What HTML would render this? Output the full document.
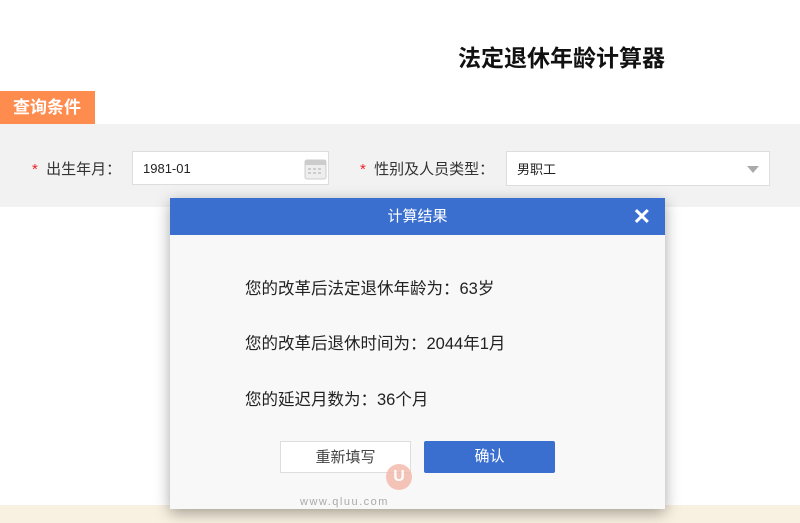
<!DOCTYPE html>
<html><head><meta charset="utf-8"><style>
body{margin:0;width:800px;height:523px;position:relative;overflow:hidden;background:#fff;font-family:"Liberation Sans","Noto Sans CJK SC",sans-serif;}
.a{position:absolute}
</style></head><body>
<div class="a" style="left:458px;top:39px;font-size:23px;font-weight:bold;color:#111;white-space:nowrap">法定退休年龄计算器</div>
<div class="a" style="left:0;top:91px;width:95px;height:33px;background:#ff8c4f;color:#fff;font-size:17px;font-weight:bold;line-height:33px;text-indent:13px">查询条件</div>
<div class="a" style="left:0;top:124px;width:800px;height:83px;background:#f2f2f2"></div>
<div class="a" style="left:32px;top:158px;font-size:15px;color:#333"><span style="color:#e22">*</span>&nbsp; 出生年月：</div>
<div class="a" style="left:132px;top:151px;width:197px;height:34px;background:#fff;border:1px solid #ddd;box-sizing:border-box;font-size:13px;line-height:34px;text-indent:10px;color:#222">1981-01
<svg class="a" style="left:171px;top:5px" width="23" height="23" viewBox="0 0 23 23"><rect x="1" y="3" width="21" height="19" rx="2" fill="#eee" stroke="#ccc"/><rect x="1" y="3" width="21" height="5" fill="#ccc"/><g fill="#ccc"><rect x="4" y="11" width="3" height="2"/><rect x="9" y="11" width="3" height="2"/><rect x="14" y="11" width="3" height="2"/><rect x="4" y="15" width="3" height="2"/><rect x="9" y="15" width="3" height="2"/><rect x="14" y="15" width="3" height="2"/></g></svg></div>
<div class="a" style="left:360px;top:158px;font-size:15px;color:#333"><span style="color:#e22">*</span>&nbsp; 性别及人员类型：</div>
<div class="a" style="left:506px;top:151px;width:264px;height:35px;background:#fff;border:1px solid #ddd;box-sizing:border-box;font-size:13px;line-height:35px;text-indent:10px;color:#222">男职工<span class="a" style="right:10px;top:14px;width:0;height:0;border-left:6px solid transparent;border-right:6px solid transparent;border-top:7px solid #aaa"></span></div>
<div class="a" style="left:0;top:505px;width:800px;height:18px;background:#f8f0e0"></div>
<div class="a" style="left:170px;top:198px;width:495px;height:311px;background:#f8f8f8;box-shadow:0 4px 14px rgba(0,0,0,.35)">
<div style="height:37px;background:#3a6fd0;color:#fff;text-align:center;line-height:37px;font-size:15px;position:relative">计算结果<span class="a" style="right:14px;top:0;font-size:22px;font-weight:bold">✕</span></div>
<div class="a" style="left:75px;top:77px;font-size:16.5px;color:#222;white-space:nowrap">您的改革后法定退休年龄为：63岁</div>
<div class="a" style="left:75px;top:132px;font-size:16.5px;color:#222;white-space:nowrap">您的改革后退休时间为：2044年1月</div>
<div class="a" style="left:75px;top:188px;font-size:16.5px;color:#222;white-space:nowrap">您的延迟月数为：36个月</div>
<div class="a" style="left:110px;top:243px;width:131px;height:32px;background:#fff;border:1px solid #ddd;box-sizing:border-box;text-align:center;line-height:31px;font-size:15px;color:#444">重新填写</div>
<div class="a" style="left:254px;top:243px;width:131px;height:32px;background:#3a6fd0;border-radius:2px;text-align:center;line-height:32px;font-size:15px;color:#fff">确认</div>
<div class="a" style="left:216px;top:266px;width:26px;height:26px;border-radius:50%;background:#f4b7a8;color:#fff;font-weight:bold;text-align:center;line-height:26px;font-size:16px;opacity:.8">U</div>
<div class="a" style="left:130px;top:298px;font-size:11px;color:#aaa;letter-spacing:1.5px">www.qluu.com</div>
</div>
</body></html>
